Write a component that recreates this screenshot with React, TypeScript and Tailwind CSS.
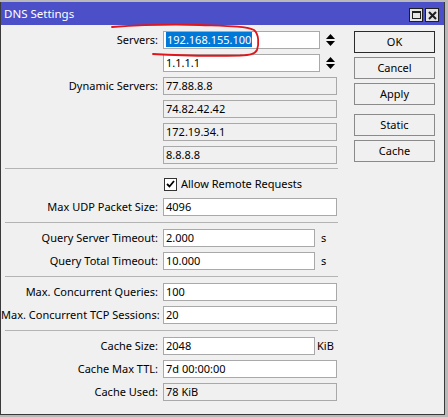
import React from "react";

const font = "font-[family-name:'Noto_Sans',sans-serif]";

function Label({ text }: { text: string }) {
  return (
    <div className="w-[162px] shrink-0 pr-[5px] text-right whitespace-nowrap leading-[18px]">
      {text}
    </div>
  );
}

function Field({
  value,
  width = "w-[174px]",
  readOnly = false,
}: {
  value: React.ReactNode;
  width?: string;
  readOnly?: boolean;
}) {
  return (
    <div
      className={`${width} h-[18px] shrink-0 border border-[#a9a9a9] pl-[2px] leading-[16px] whitespace-nowrap overflow-hidden ${
        readOnly ? "bg-[#f0f0f0]" : "bg-white"
      }`}
    >
      {value}
    </div>
  );
}

function Row({
  label = "",
  className = "mt-[5px]",
  children,
}: {
  label?: string;
  className?: string;
  children: React.ReactNode;
}) {
  return (
    <div className={`flex items-center h-[18px] ${className}`}>
      <Label text={label} />
      <div className="flex items-center">{children}</div>
    </div>
  );
}

function Spinner() {
  return (
    <svg width="9" height="12" viewBox="0 0 9 12" className="ml-[6px]">
      <path d="M4.5 0 L9 5 L0 5 Z" fill="#000" />
      <path d="M0 7 L9 7 L4.5 12 Z" fill="#000" />
    </svg>
  );
}

function Separator({ className = "mt-[6px]" }: { className?: string }) {
  return <div className={`ml-[4px] w-[333px] h-px bg-[#b4b4b4] ${className}`} />;
}

function Button({ text, primary = false, className = "" }: { text: string; primary?: boolean; className?: string }) {
  return (
    <div
      className={`w-[81px] h-[22px] flex items-center justify-center bg-[#f0f0f0] border ${
        primary ? "border-[#2b2b2b]" : "border-[#8a8a8a]"
      } ${className}`}
    >
      {text}
    </div>
  );
}

export default function App() {
  return (
    <div className={`relative w-[448px] h-[417px] bg-[#b9b9b9] overflow-hidden text-[11px] text-black ${font}`}>
      <div className="pt-[2px]">
        {/* Window */}
        <div className="w-[445px] h-[413px] border border-[#3a3a3a] border-t-0 bg-[#f0f0f0] flex flex-col">
          {/* Title bar */}
          <div className="h-[23px] bg-[#4b50c9] flex items-center pl-[3px] pr-[5px]">
            <span className="text-white text-[11.5px] leading-none">DNS Settings</span>
            <div className="ml-auto flex items-center gap-[2px] mt-[3px]">
              <div className="w-[14px] h-[14px] bg-[#e4e4e4] border border-[#1e1e1e] flex items-center justify-center">
                <div className="w-[9px] h-[8px] border border-[#1e1e1e] border-t-2" />
              </div>
              <div className="w-[14px] h-[14px] bg-[#e4e4e4] border border-[#1e1e1e] flex items-center justify-center">
                <svg width="9" height="9" viewBox="0 0 9 9">
                  <path d="M1 1 L8 8 M8 1 L1 8" stroke="#1e1e1e" strokeWidth="2" />
                </svg>
              </div>
            </div>
          </div>

          {/* Body */}
          <div className="flex pt-[6px]">
            {/* Form */}
            <div className="w-[336px] flex flex-col">
              <Row label="Servers:" className="">
                <Field
                  width="w-[157px]"
                  value={<span className="bg-[#0078d7] text-white px-[1px]">192.168.155.100</span>}
                />
                <Spinner />
              </Row>
              <Row>
                <Field width="w-[157px]" value="1.1.1.1" />
                <Spinner />
              </Row>
              <Row label="Dynamic Servers:">
                <Field readOnly value="77.88.8.8" />
              </Row>
              <Row>
                <Field readOnly value="74.82.42.42" />
              </Row>
              <Row>
                <Field readOnly value="172.19.34.1" />
              </Row>
              <Row>
                <Field readOnly value="8.8.8.8" />
              </Row>

              <Separator className="mt-[4px]" />

              <Row className="mt-[6px]">
                <div className="flex items-center ml-[1px]">
                  <div className="w-[13px] h-[13px] bg-white border border-[#333] flex items-center justify-center">
                    <svg width="9" height="8" viewBox="0 0 9 8">
                      <path d="M1 4 L3.5 6.5 L8 1" stroke="#000" strokeWidth="1.8" fill="none" />
                    </svg>
                  </div>
                  <span className="ml-[4px] whitespace-nowrap">Allow Remote Requests</span>
                </div>
              </Row>
              <Row label="Max UDP Packet Size:">
                <Field value="4096" />
              </Row>

              <Separator />

              <Row label="Query Server Timeout:" className="mt-[6px]">
                <Field width="w-[152px]" value="2.000" />
                <span className="ml-[6px]">s</span>
              </Row>
              <Row label="Query Total Timeout:">
                <Field width="w-[152px]" value="10.000" />
                <span className="ml-[6px]">s</span>
              </Row>

              <Separator />

              <Row label="Max. Concurrent Queries:" className="mt-[6px]">
                <Field value="100" />
              </Row>
              <Row label="Max. Concurrent TCP Sessions:">
                <Field value="20" />
              </Row>

              <Separator />

              <Row label="Cache Size:" className="mt-[6px]">
                <Field width="w-[152px]" value="2048" />
                <span className="ml-[2px]">KiB</span>
              </Row>
              <Row label="Cache Max TTL:">
                <Field value="7d 00:00:00" />
              </Row>
              <Row label="Cache Used:">
                <Field readOnly value="78 KiB" />
              </Row>
            </div>

            {/* Buttons */}
            <div className="ml-[17px] flex flex-col">
              <Button text="OK" primary />
              <Button text="Cancel" className="mt-[4px]" />
              <Button text="Apply" className="mt-[4px]" />
              <Button text="Static" className="mt-[9px]" />
              <Button text="Cache" className="mt-[4px]" />
            </div>
          </div>
        </div>
      </div>

      {/* Red hand-drawn annotation */}
      <svg className="absolute left-0 top-0 pointer-events-none" width="448" height="417" viewBox="0 0 448 417">
        <path
          d="M112 27 C140 25 170 24 200 25 C225 26 245 26 254 30 C259 34 259 44 257 50 C255 54 250 55 240 55.5 C215 56 185 56 153 54"
          stroke="#e0161b"
          strokeWidth="1.8"
          fill="none"
          strokeLinecap="round"
        />
      </svg>
    </div>
  );
}
